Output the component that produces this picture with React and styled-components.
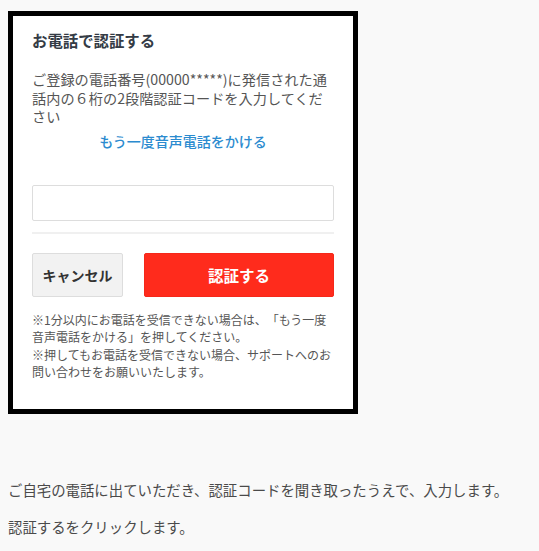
import React from "react";
import styled, { createGlobalStyle } from "styled-components";

const GlobalStyle = createGlobalStyle`
  body {
    margin: 0;
    background: #f9f9f9;
    font-family: "Noto Sans CJK JP", "Noto Sans", sans-serif;
    text-spacing-trim: space-all;
  }
`;

const Page = styled.div`
  padding: 11px 8px 0;
`;

const Frame = styled.div`
  width: 350px;
  box-sizing: border-box;
  border: 5px solid #000;
  background: #fff;
  padding: 14px 19px 28px;
`;

const Title = styled.h2`
  margin: 0;
  font-size: 15.4px;
  line-height: 20px;
  font-weight: 700;
  color: #343b45;
`;

const Lead = styled.p`
  margin: 20px 0 0;
  font-size: 14.2px;
  line-height: 18.5px;
  color: #555;
`;

const Retry = styled.a`
  display: block;
  margin-top: 6px;
  text-align: center;
  font-size: 14px;
  line-height: 18px;
  font-weight: 500;
  color: #2b8bcf;
  text-decoration: none;
  cursor: pointer;
`;

const CodeInput = styled.input`
  display: block;
  width: 100%;
  box-sizing: border-box;
  height: 36px;
  margin-top: 35px;
  border: 1px solid #ddd;
  border-radius: 2px;
  outline: none;
  font-size: 14px;
  padding: 0 10px;
`;

const Divider = styled.hr`
  margin: 11px 0 0;
  border: none;
  height: 2px;
  background: #f0f0f0;
`;

const Actions = styled.div`
  display: flex;
  gap: 21px;
  margin-top: 19px;
`;

const Button = styled.button`
  height: 44px;
  box-sizing: border-box;
  border-radius: 2px;
  font-family: inherit;
  font-weight: 700;
  cursor: pointer;
  border: 1px solid ${(p) => (p.$primary ? "#f5281a" : "#ddd")};
  background: ${(p) => (p.$primary ? "#ff2b1c" : "#f2f2f2")};
  color: ${(p) => (p.$primary ? "#fff" : "#333")};
  font-size: ${(p) => (p.$primary ? "15.5px" : "14px")};
  flex: ${(p) => (p.$primary ? "1" : "0 0 91px")};
  padding: 0;
`;

const Notes = styled.p`
  margin: 14px 0 0;
  font-size: 12px;
  line-height: 17.5px;
  color: #555;
`;

const Caption = styled.p`
  margin: 0;
  font-size: 14.4px;
  line-height: 22px;
  color: #4a4a4a;

  &:first-of-type {
    margin-top: 65px;
  }
  & + & {
    margin-top: 15px;
  }
`;

export default function App() {
  return (
    <Page>
      <GlobalStyle />
      <Frame>
        <Title>お電話で認証する</Title>
        <Lead>
          ご登録の電話番号(00000*****)に発信された通
          <br />
          話内の６桁の2段階認証コードを入力してくだ
          <br />
          さい
        </Lead>
        <Retry>もう一度音声電話をかける</Retry>
        <CodeInput type="text" />
        <Divider />
        <Actions>
          <Button>キャンセル</Button>
          <Button $primary>認証する</Button>
        </Actions>
        <Notes>
          ※1分以内にお電話を受信できない場合は、「もう一度
          <br />
          音声電話をかける」を押してください。
          <br />
          ※押してもお電話を受信できない場合、サポートへのお
          <br />
          問い合わせをお願いいたします。
        </Notes>
      </Frame>
      <Caption>ご自宅の電話に出ていただき、認証コードを聞き取ったうえで、入力します。</Caption>
      <Caption>認証するをクリックします。</Caption>
    </Page>
  );
}
